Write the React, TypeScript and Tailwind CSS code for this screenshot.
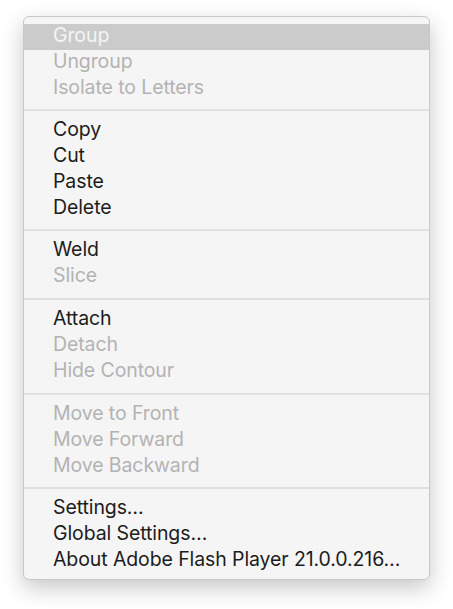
type Item = { label: string; disabled?: boolean; active?: boolean };

const groups: Item[][] = [
  [
    { label: "Group", active: true },
    { label: "Ungroup", disabled: true },
    { label: "Isolate to Letters", disabled: true },
  ],
  [{ label: "Copy" }, { label: "Cut" }, { label: "Paste" }, { label: "Delete" }],
  [{ label: "Weld" }, { label: "Slice", disabled: true }],
  [
    { label: "Attach" },
    { label: "Detach", disabled: true },
    { label: "Hide Contour", disabled: true },
  ],
  [
    { label: "Move to Front", disabled: true },
    { label: "Move Forward", disabled: true },
    { label: "Move Backward", disabled: true },
  ],
  [
    { label: "Settings…" },
    { label: "Global Settings…" },
    { label: "About Adobe Flash Player 21.0.0.216…" },
  ],
];

// separator heights above each group (index 1..5)
const sepHeights = ["", "h-[16px]", "h-[16px]", "h-[17px]", "h-[17px]", "h-[16px]"];

function Row({ item }: { item: Item }) {
  let tone = "text-[#1c1c1c]";
  if (item.disabled) tone = "text-[#b3b3b3]";
  if (item.active) tone = "bg-[#cbcbcb] text-[#f4f4f4]";

  return (
    <div className={`flex h-[26px] items-center pb-[2px] pl-[29px] ${tone}`}>
      {item.label}
    </div>
  );
}

export default function App() {
  return (
    <div className="min-h-[609px] w-[453px] bg-white pl-[23px] pt-[16px]">
      {/* context menu */}
      <div
        className="
          w-[407px]
          overflow-hidden
          rounded-[6px]
          border
          border-[#c8c8c8]
          bg-[#f5f5f5]
          pb-[5px]
          pt-[7px]
          text-[19.5px]
          leading-none
          tracking-[-0.1px]
          shadow-[0_8px_22px_rgba(0,0,0,0.22)]
        "
        style={{ fontFamily: "Inter, sans-serif" }}
      >
        {groups.map((items, gi) => (
          <div key={gi}>
            {gi > 0 && (
              <div className={`flex items-center ${sepHeights[gi]}`}>
                <div className="h-[2px] w-full bg-[#e0e0e0]" />
              </div>
            )}
            {items.map((item) => (
              <Row key={item.label} item={item} />
            ))}
          </div>
        ))}
      </div>
    </div>
  );
}
